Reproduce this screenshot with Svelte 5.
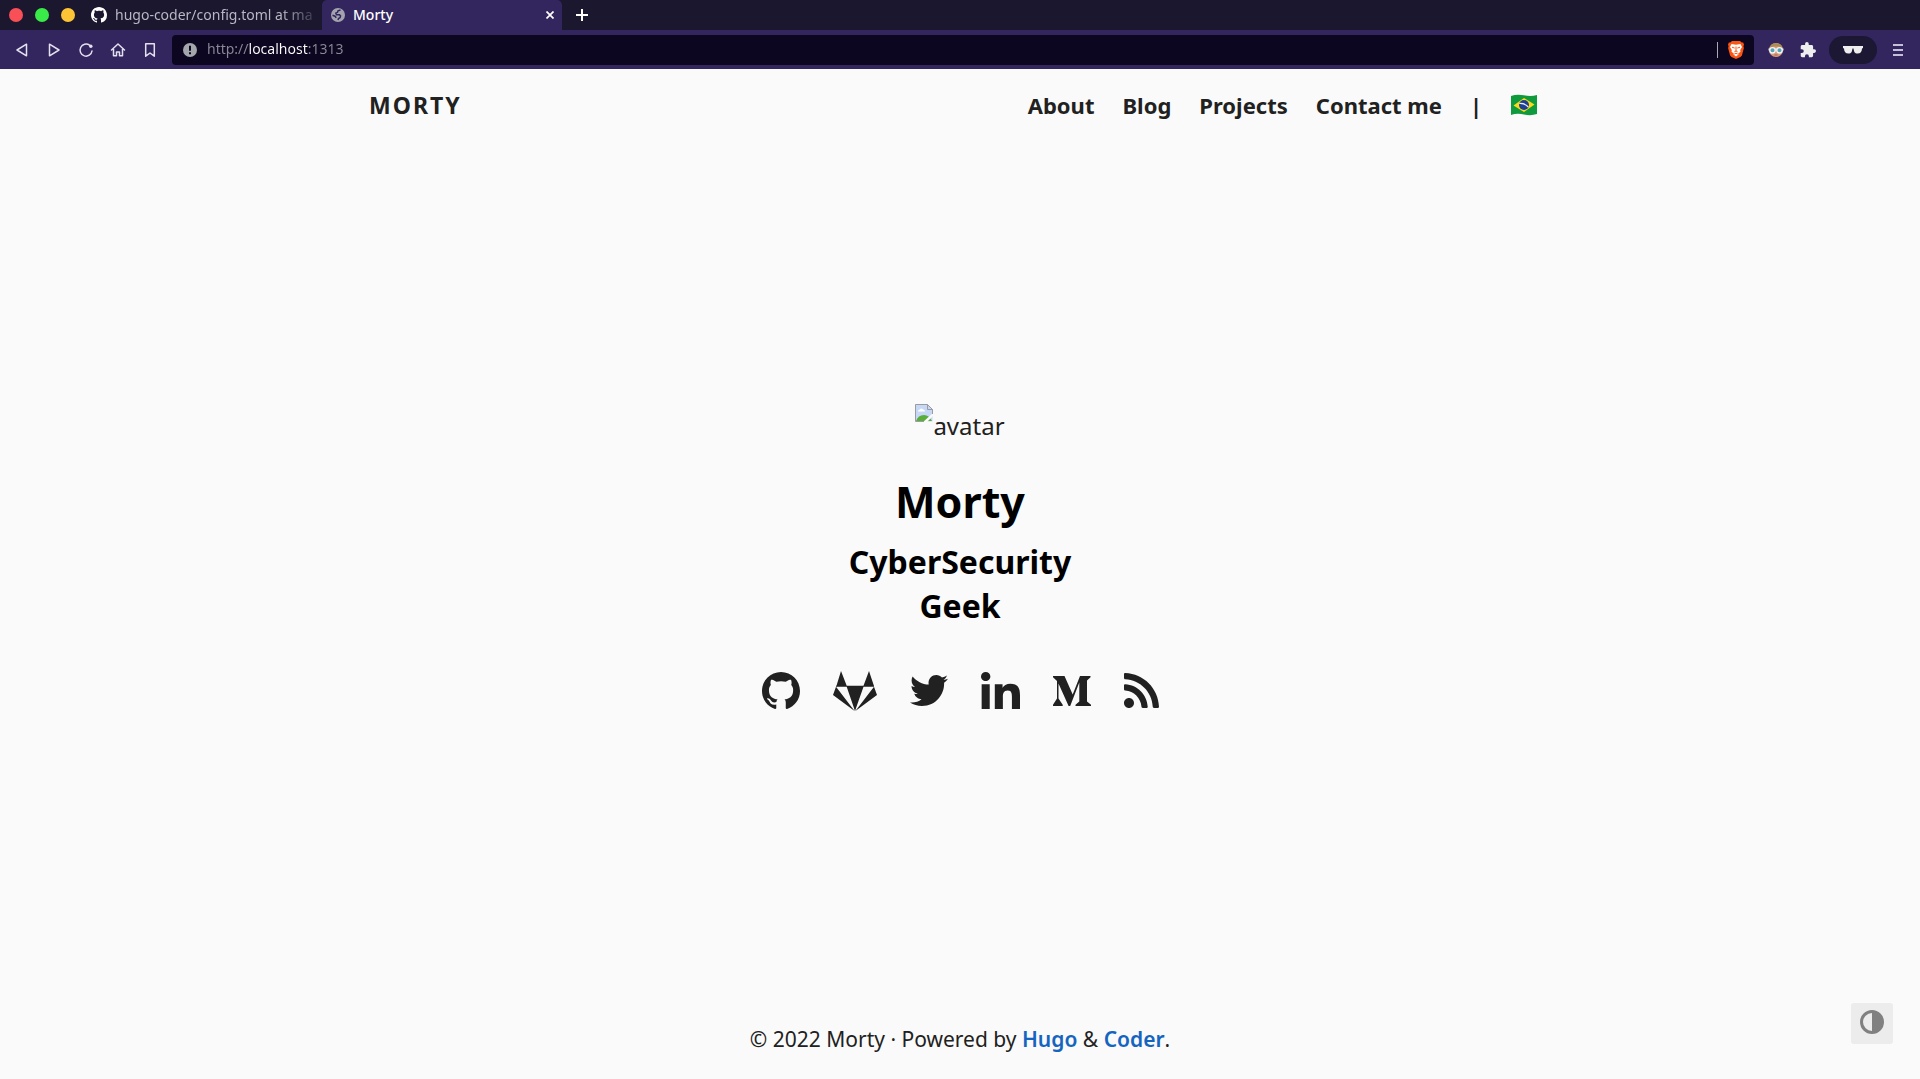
<script>
  let address = $state('http://localhost:1313');
  let dark = $state(false);

  const links = ['About', 'Blog', 'Projects', 'Contact me'];

  const octocat =
    'M8 0C3.58 0 0 3.58 0 8c0 3.54 2.29 6.53 5.47 7.59.4.07.55-.17.55-.38 0-.19-.01-.82-.01-1.49-2.01.37-2.53-.49-2.69-.94-.09-.23-.48-.94-.82-1.13-.28-.15-.68-.52-.01-.53.63-.01 1.08.58 1.23.82.72 1.21 1.87.87 2.33.66.07-.52.28-.87.51-1.07-1.78-.2-3.64-.89-3.64-3.95 0-.87.31-1.59.82-2.15-.08-.2-.36-1.02.08-2.12 0 0 .67-.21 2.2.82.64-.18 1.32-.27 2-.27s1.36.09 2 .27c1.53-1.04 2.2-.82 2.2-.82.44 1.1.16 1.92.08 2.12.51.56.82 1.27.82 2.15 0 3.07-1.87 3.75-3.65 3.95.29.25.54.73.54 1.48 0 1.07-.01 1.93-.01 2.2 0 .21.15.46.55.38A8.01 8.01 0 0 0 16 8c0-4.42-3.58-8-8-8z';

  const socials = [
    { name: 'GitHub', box: '0 0 16 15.6', w: 38, h: 37, d: octocat },
    {
      name: 'GitLab', box: '0 0 44 40', w: 44, h: 40,
      d: 'M8 0L13.800 15H3.400zM36 0L41 15H30.400zM13.600 15.600H30.600L22 40zM3 15.800L21.600 40 0 24zM41 15.800L22.400 40 44 24zM3 14.800H41V15.800H3z'
    },
    {
      name: 'Twitter', box: '0 48 512 416', w: 38, h: 31,
      d: 'M459.37 151.716c.325 4.548.325 9.097.325 13.645 0 138.72-105.583 298.558-298.558 298.558-59.452 0-114.68-17.219-161.137-47.106 8.447.974 16.568 1.299 25.34 1.299 49.055 0 94.213-16.568 130.274-44.832-46.132-.975-84.792-31.188-98.112-72.772 6.498.974 12.995 1.624 19.818 1.624 9.421 0 18.843-1.3 27.614-3.573-48.081-9.747-84.143-51.98-84.143-102.985v-1.299c13.969 7.797 30.214 12.67 47.431 13.319-28.264-18.843-46.781-51.005-46.781-87.391 0-19.492 5.197-37.36 14.294-52.954 51.655 63.675 129.3 105.258 216.365 109.807-1.624-7.797-2.599-15.918-2.599-24.04 0-57.828 46.782-104.934 104.934-104.934 30.213 0 57.502 12.67 76.67 33.137 23.715-4.548 46.456-13.32 66.599-25.34-7.798 24.366-24.366 44.833-46.132 57.827 21.117-2.273 41.584-8.122 60.426-16.243-14.292 20.791-32.161 39.308-52.628 54.253z'
    },
    {
      name: 'LinkedIn', box: '0 0 448 448', w: 39, h: 37,
      d: 'M100.280 448H7.400V148.900h92.880zM53.790 108.100C24.090 108.100 0 83.500 0 53.800a53.790 53.790 0 0 1 107.580 0c0 29.700-24.100 54.300-53.790 54.300zM447.900 448h-92.680V302.400c0-34.700-.7-79.200-48.290-79.200-48.290 0-55.690 37.700-55.690 76.700V448h-92.780V148.900h89.080v40.800h1.300c12.400-23.500 42.690-48.300 87.880-48.300 94 0 111.280 61.900 111.280 142.300V448z'
    },
    {
      name: 'Medium', box: '0 0 38 30', w: 38, h: 30,
      d: 'M0 0H11.500L19.700 18.500 27 0H37.500V1.200L34 4.500V25.500L38 28.800V30H22.500V28.800L26.300 25.500V6.500L17.200 30H15.600L5.500 7.500V22.500L9.700 28.800V30H0V28.800L4 22.500V5L0 1.200z'
    },
    {
      name: 'RSS', box: '0 32 448 448', w: 35, h: 35,
      d: 'M128.081 415.959c0 35.369-28.672 64.041-64.041 64.041S0 451.328 0 415.959s28.672-64.041 64.041-64.041 64.040 28.673 64.040 64.041zm175.660 47.250c-8.354-154.600-132.185-278.587-286.950-286.950C7.656 175.765 0 183.105 0 192.253v48.069c0 8.415 6.490 15.472 14.887 16.018 111.832 7.284 201.473 96.702 208.772 208.772.547 8.397 7.604 14.887 16.018 14.887h48.069c9.149.001 16.489-7.655 15.995-16.790zm144.249.288C439.596 229.677 251.465 40.445 16.503 32.010 7.473 31.686 0 38.981 0 48.016v48.068c0 8.625 6.835 15.645 15.453 15.999 191.179 7.839 344.627 161.316 352.465 352.465.353 8.618 7.373 15.453 15.999 15.453h48.068c9.034-.001 16.329-7.474 16.005-16.504z'
    }
  ];
</script>

<div class="window">
  <header class="chrome">
    <div class="tabs">
      <div class="lights">
        <button class="light red" aria-label="Close window"></button>
        <button class="light green" aria-label="Maximise window"></button>
        <button class="light yellow" aria-label="Minimise window"></button>
      </div>
      <button class="tab idle">
        <svg width="16" height="16" viewBox="0 0 16 16" fill="#fff"><path d={octocat} /></svg>
        <span class="title">hugo-coder/config.toml at ma</span>
      </button>
      <div class="tab current">
        <svg width="14" height="14" viewBox="0 0 14 14">
          <circle cx="7" cy="7" r="7" fill="#a5a4ae" />
          <path d="M9.500 2L7 2.800 6.500 4.300 4.800 5.200 5.500 6.700H8.500L9.600 8 9 9.800 7.500 10.500 7 12M1.500 7.200L4 8.200 5.300 9.800" fill="none" stroke="#33265f" stroke-width="1.500" />
        </svg>
        <span class="title">Morty</span>
        <button class="plain" aria-label="Close tab">
          <svg width="8" height="8" viewBox="0 0 8 8"><path d="M.5.5l7 7M7.500.5l-7 7" stroke="#fff" stroke-width="1.700" /></svg>
        </button>
      </div>
      <button class="plain add" aria-label="New tab">
        <svg width="12" height="12" viewBox="0 0 12 12"><path d="M6 0v12M0 6h12" stroke="#fff" stroke-width="2" /></svg>
      </button>
    </div>

    <div class="toolbar">
      <div class="nav-buttons">
        <button class="plain" aria-label="Back">
          <svg class="line" width="16" height="16" viewBox="0 0 16 16"><path d="M12.500 2.200v11.600L3 8z" /></svg>
        </button>
        <button class="plain" aria-label="Forward">
          <svg class="line" width="16" height="16" viewBox="0 0 16 16"><path d="M3.500 2.200v11.600L13 8z" /></svg>
        </button>
        <button class="plain" aria-label="Reload">
          <svg class="line" width="16" height="16" viewBox="0 0 16 16"><path d="M11.500 3.200A6 6 0 1 0 14 9" /><circle cx="12.800" cy="4.200" r="1.700" fill="#e4e1ee" stroke="none" /></svg>
        </button>
        <button class="plain" aria-label="Home">
          <svg class="line" width="16" height="16" viewBox="0 0 16 16"><path d="M1.500 8L8 2l6.500 6M3.500 7v6.800h3V10h3v3.800h3V7" /></svg>
        </button>
        <button class="plain" aria-label="Bookmark">
          <svg class="line" width="16" height="16" viewBox="0 0 16 16"><path d="M3.700 1.800h8.600v12.400L8 11l-4.300 3.200z" /></svg>
        </button>
      </div>

      <div class="address">
        <svg width="14" height="14" viewBox="0 0 14 14"><circle cx="7" cy="7" r="7" fill="#a3a7ab" /><path d="M7 2.700v5M7 9.300v2" stroke="#0c0621" stroke-width="2" /></svg>
        <input type="text" aria-label="Address" bind:value={address} />
        <span class="rule"></span>
        <button class="plain" aria-label="Brave Shields">
          <svg width="16" height="18" viewBox="0 0 16 18">
            <path d="M4 0h8l1.700 1.600 1.500-.2.800 2.400-.6 1.400.5 1.700-2 7.500-1.400 1.600L8 18l-4.500-2-1.400-1.600-2-7.500.5-1.700L0 3.800l.8-2.400 1.500.2z" fill="#fb5413" />
            <path d="M3.500 3L8 3.700 12.500 3 14 6l-1.800 3 .3 1.700-2.300 1.800.3 1L8 15.500l-2.500-2 .3-1-2.300-1.800.3-1.700L2 6z" fill="#fff" />
            <path d="M4 6.200l2.700.9M12 6.200l-2.700.9M8 5.500V10l-1.600.8M8 10l1.600.8M6.300 13L8 12.200l1.700.8" fill="none" stroke="#fb5413" />
          </svg>
        </button>
      </div>

      <div class="extras">
        <button class="plain" aria-label="Extension">
          <svg width="16" height="16" viewBox="0 0 16 16">
            <circle cx="8" cy="8" r="7" fill="#d99a78" />
            <path d="M1.200 6.500A7 7 0 0 1 14.800 6.500L11 4.500H5z" fill="#ad8b55" />
            <path d="M.5 7.500h15" stroke="#e8e8ec" stroke-width="2" />
            <circle cx="4.500" cy="8.300" r="2.700" fill="#54a5b5" stroke="#f4f4f6" stroke-width="1.300" />
            <circle cx="11.500" cy="8.300" r="2.700" fill="#54a5b5" stroke="#f4f4f6" stroke-width="1.300" />
            <path d="M6.500 13h3" stroke="#a95f4a" />
          </svg>
        </button>
        <button class="plain" aria-label="Extensions">
          <svg width="16" height="16" viewBox="1 1 22 22" fill="#eee"><path d="M20.500 11H19V7c0-1.100-.9-2-2-2h-4V3.500a2.500 2.500 0 0 0-5 0V5H4c-1.100 0-2 .9-2 2v3.800h1.500a2.700 2.700 0 0 1 0 5.400H2V20c0 1.100.9 2 2 2h3.800v-1.500a2.700 2.700 0 0 1 5.400 0V22H17c1.100 0 2-.9 2-2v-4h1.500a2.500 2.500 0 0 0 0-5z" /></svg>
        </button>
        <button class="plain private" aria-label="Private window">
          <svg width="20" height="8" viewBox="0 0 20 8"><path d="M0 0h20v2l-1 .5c0 3-1.500 5-4.500 5S11 5.500 10.500 2.500h-1C9 5.500 8.500 7.500 5.500 7.500S1 5.500 1 2.500L0 2z" fill="#eee" /></svg>
        </button>
        <button class="plain menu" aria-label="Menu">
          <svg width="10" height="12" viewBox="0 0 10 12"><path d="M0 1h10M0 6h10M0 11h10" stroke="#c4c0d8" stroke-width="2" /></svg>
        </button>
      </div>
    </div>
  </header>

  <div class="page">
    <nav>
      <a class="brand" href="#home">MORTY</a>
      <ul>
        {#each links as link}
          <li><a href="#{link}">{link}</a></li>
        {/each}
        <li>|</li>
        <li>
          <a class="flag" href="#pt-br" aria-label="Português">
            <svg width="28" height="22" viewBox="0 0 28 22">
              <path d="M1 2Q7-.3 14 1.300T27 1V20Q21 22 14 20.500T1 21z" fill="#109a3e" />
              <path d="M3.500 11.500L14 4l10.500 6.500L14 18z" fill="#fcd915" />
              <circle cx="14" cy="11" r="5" fill="#1d3e93" />
              <path d="M9.300 9.500q5.500-.5 9 3.500" fill="none" stroke="#e8eefa" stroke-width="1.200" />
            </svg>
          </a>
        </li>
      </ul>
    </nav>

    <main>
      <div class="avatar">
        <svg width="18" height="18" viewBox="0 0 18 18">
          <path d="M.5.500H12.500L17.500 5.500V17.500H.5z" fill="#c6d8f6" />
          <path d="M1 17Q3 11 9 11q5 0 8 6z" fill="#59ad3a" />
          <path d="M3 7.500Q3 5.500 5 5.500q1-2 3 0 2 0 2 2z" fill="#fff" />
          <path d="M18 9v3l-6 6H8z" fill="#fafafa" />
          <path d="M.5 17.500V.5H12.500L17.500 5.500V10M12.500.500V5.500H17.500M.5 17.500H9" fill="none" stroke="#9b9ba0" />
        </svg>
        <span>avatar</span>
      </div>
      <h1>Morty</h1>
      <h2>CyberSecurity</h2>
      <h2>Geek</h2>
      <ul class="socials">
        {#each socials as s}
          <li>
            <a href="#{s.name}" aria-label={s.name}>
              <svg width={s.w} height={s.h} viewBox={s.box} preserveAspectRatio="none"><path d={s.d} /></svg>
            </a>
          </li>
        {/each}
      </ul>
    </main>

    <footer>© 2022 Morty · Powered by <a href="#hugo">Hugo</a> &amp; <a href="#coder">Coder</a>.</footer>

    <button class="scheme" aria-label="Toggle colour scheme" aria-pressed={dark} onclick={() => (dark = !dark)}>
      <svg width="24" height="24" viewBox="0 0 24 24"><circle cx="12" cy="12" r="10.500" fill="none" stroke="#808080" stroke-width="3" /><path d="M12 1a11 11 0 0 1 0 22z" fill="#808080" /></svg>
    </button>
  </div>
</div>

<style>
  :global(body) {
    margin: 0;
    background: #fafafa;
  }
  .window {
    min-height: 100vh;
    display: flex;
    flex-direction: column;
    font-family: 'Noto Sans', 'Open Sans', sans-serif;
    color: #212121;
  }
  svg {
    display: block;
    flex: none;
  }
  ul {
    list-style: none;
    margin: 0;
    padding: 0;
  }
  a {
    color: inherit;
    text-decoration: none;
  }
  button {
    font: inherit;
    border: 0;
    cursor: pointer;
  }
  .plain {
    display: flex;
    padding: 0;
    background: none;
  }

  .tabs {
    height: 30px;
    display: flex;
    align-items: center;
    background: #1a172e;
    color: #fff;
    font-size: 14px;
  }
  .lights {
    display: flex;
    gap: 12px;
    padding: 0 8px 0 9px;
  }
  .light {
    width: 14px;
    height: 14px;
    padding: 0;
    border-radius: 50%;
  }
  .red { background: #f94f57; }
  .green { background: #3aea49; }
  .yellow { background: #fdc536; }
  .tab {
    box-sizing: border-box;
    height: 30px;
    display: flex;
    align-items: center;
    gap: 8px;
    padding: 0 8px;
  }
  .title {
    flex: 1;
    padding-bottom: 1px;
    line-height: 20px;
    white-space: nowrap;
    text-align: left;
  }
  .idle {
    width: 239px;
    padding-right: 0;
    background: none;
    color: #b9b7c4;
  }
  .idle .title {
    mask-image: linear-gradient(to right, #000 80%, transparent);
  }
  .current {
    width: 240px;
    padding-left: 9px;
    border-radius: 5px 5px 0 0;
    background: #33265f;
    font-weight: 500;
  }
  .add {
    margin-left: 14px;
  }

  .toolbar {
    height: 39px;
    display: flex;
    align-items: center;
    background: #33265f;
  }
  .nav-buttons {
    display: flex;
    gap: 16px;
    padding: 0 14px;
  }
  .line {
    fill: none;
    stroke: #e4e1ee;
    stroke-width: 1.5;
    stroke-linejoin: round;
    stroke-linecap: round;
  }
  .address {
    flex: 1;
    height: 30px;
    display: flex;
    align-items: center;
    gap: 10px;
    padding: 0 10px 0 11px;
    border-radius: 4px;
    background: #0c0621;
  }
  input {
    flex: 1;
    min-width: 0;
    height: 30px;
    padding: 0 0 2px;
    border: 0;
    outline: 0;
    font: 14px 'Noto Sans', sans-serif;
    color: transparent;
    caret-color: #fff;
    background: linear-gradient(to right, #8b8996 41px, #fff 41px, #fff 101px, #8b8996 101px);
    background-clip: text;
  }
  .rule {
    width: 1px;
    height: 16px;
    background: #aaa8b4;
  }
  .extras {
    display: flex;
    align-items: center;
    gap: 16px;
    padding: 0 17px 0 14px;
  }
  .private {
    width: 48px;
    height: 28px;
    margin-left: -3px;
    align-items: center;
    justify-content: center;
    border-radius: 14px;
    background: #1c1733;
  }

  .page {
    position: relative;
    flex: 1;
    display: flex;
    flex-direction: column;
    background: #fafafa;
  }
  nav {
    box-sizing: border-box;
    width: 100%;
    max-width: 1184px;
    height: 72px;
    margin: 0 auto;
    padding: 0 14px 0 1px;
    display: flex;
    align-items: center;
    justify-content: space-between;
    font-size: 22px;
    font-weight: 700;
  }
  .brand {
    font-size: 23px;
    letter-spacing: 2px;
  }
  nav ul {
    display: flex;
    align-items: center;
    gap: 28px;
  }

  main {
    flex: 1;
    display: flex;
    flex-direction: column;
    align-items: center;
    justify-content: center;
    padding-bottom: 24px;
    color: #000;
  }
  .avatar {
    display: flex;
    color: #212121;
    font-size: 24px;
    line-height: 44px;
  }
  h1,
  h2 {
    margin: 0;
    text-align: center;
  }
  h1 {
    margin-top: 24px;
    font-size: 43px;
    line-height: 60px;
  }
  h2 {
    font-size: 32px;
    line-height: 44px;
  }
  h1 + h2 {
    margin-top: 8px;
  }
  .socials {
    display: flex;
    align-items: center;
    gap: 33px;
    margin-top: 43px;
    fill: #212121;
  }
  footer {
    padding: 24px 0 22px;
    text-align: center;
    font-size: 21px;
    line-height: 36px;
  }
  footer a {
    color: #1565c0;
    font-weight: 600;
  }
  .scheme {
    position: absolute;
    right: 27px;
    bottom: 35px;
    padding: 7px 9px 10px;
    border-radius: 3px;
    background: #ececec;
  }
</style>
